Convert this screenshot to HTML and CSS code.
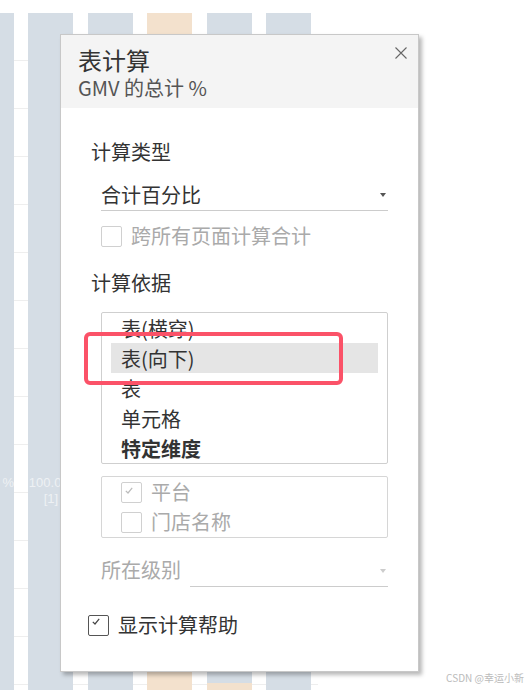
FILE: index.html
```html
<!DOCTYPE html>
<html lang="zh-CN">
<head>
    <meta charset="UTF-8">
    <meta name="viewport" content="width=device-width, initial-scale=1.0">
    <title>表计算</title>
    <link rel="stylesheet" href="styles.css">
</head>
<body>
    <div class="chart">
        <div class="bar bar-edge"><span class="bar-label">%</span></div>
        <div class="bar"><span class="bar-label">100.0%</span><span class="bar-label">[1]</span></div>
        <div class="bar"></div>
        <div class="bar bar-peach"></div>
        <div class="bar bar-split"></div>
        <div class="bar"></div>
    </div>

    <div class="calc">
        <div class="calc-head">
            <div class="calc-title">表计算</div>
            <div class="calc-sub">GMV 的总计 %</div>
            <svg class="close" width="12" height="12" viewBox="0 0 12 12">
                <path d="M0.5 0.5 L11.5 11.5 M11.5 0.5 L0.5 11.5" stroke="#666" stroke-width="1.1" fill="none"/>
            </svg>
        </div>

        <div class="calc-body">
            <div class="label label-type">计算类型</div>
            <div class="select">
                <span>合计百分比</span>
                <span class="caret"></span>
            </div>
            <label class="check check-across disabled">
                <span class="box"></span>
                <span>跨所有页面计算合计</span>
            </label>

            <div class="label label-by">计算依据</div>
            <div class="list">
                <div class="item">表(横穿)</div>
                <div class="item selected">表(向下)</div>
                <div class="item">表</div>
                <div class="item">单元格</div>
                <div class="item bold">特定维度</div>
                <div class="mark"></div>
            </div>

            <div class="dims">
                <label class="check disabled">
                    <span class="box">
                        <svg width="8" height="7" viewBox="0 0 8 7"><path d="M0.8 3.8 L3 6 L7.2 0.8" stroke="#bbb" stroke-width="1.2" fill="none"/></svg>
                    </span>
                    <span>平台</span>
                </label>
                <label class="check disabled">
                    <span class="box"></span>
                    <span>门店名称</span>
                </label>
            </div>

            <div class="level">
                <span class="level-label">所在级别</span>
                <div class="select select-off">
                    <span></span>
                    <span class="caret"></span>
                </div>
            </div>

            <label class="check check-help">
                <span class="box">
                    <svg width="8" height="7" viewBox="0 0 8 7"><path d="M0.8 3.8 L3 6 L7.2 0.8" stroke="#444" stroke-width="1.2" fill="none"/></svg>
                </span>
                <span>显示计算帮助</span>
            </label>
        </div>
    </div>

    <div class="watermark">CSDN @幸运小新</div>
</body>
</html>
```

FILE: styles.css
```css
* {
    box-sizing: border-box;
}
body {
    margin: 0;
    width: 528px;
    height: 690px;
    overflow: hidden;
    background: #fff;
    font-family: "Noto Sans CJK SC", "Noto Sans", sans-serif;
    color: #333;
    position: relative;
}

/* chart behind the dialog */
.chart {
    margin-top: 13px;
    width: 318px;
    height: 677px;
    display: flex;
    gap: 14.4px;
    background: repeating-linear-gradient(to bottom, transparent 0 47px, #eeeeee 47px 48px);
}
.bar {
    width: 45px;
    flex: none;
    background: #d5dde5;
    display: flex;
    flex-direction: column;
    align-items: center;
    padding-top: 462px;
    font-family: "Liberation Sans", Arial, sans-serif;
    font-size: 13px;
    line-height: 16px;
    color: #eef1f4;
    white-space: nowrap;
}
.bar-edge {
    width: 14px;
    align-items: flex-end;
}
.bar-peach {
    background: #f3e1cd;
}
.bar-split {
    background: linear-gradient(to bottom, #d5dde5 0 670px, #f3e1cd 670px);
}

/* dialog */
.calc {
    position: absolute;
    left: 60px;
    top: 34px;
    width: 359px;
    height: 638px;
    background: #fff;
    border: 1px solid #c8c8c8;
    box-shadow: 3px 3px 4px rgba(0, 0, 0, 0.28);
}
.calc-head {
    position: relative;
    height: 73px;
    background: #f4f4f4;
    padding: 11px 17px 0;
}
.calc-title {
    font-size: 24px;
    line-height: 28px;
    color: #333;
}
.calc-sub {
    font-size: 20px;
    line-height: 26px;
    color: #555;
    margin-top: 1px;
}
.close {
    position: absolute;
    right: 11px;
    top: 12px;
}

.calc-body {
    padding: 0 30px;
}
.label {
    font-size: 20px;
    line-height: 26px;
}
.label-type {
    padding-top: 31px;
}
.label-by {
    margin-top: 21px;
}

.select {
    display: flex;
    align-items: center;
    justify-content: space-between;
    margin: 16px 0 0 10px;
    height: 30px;
    border-bottom: 1px solid #ccc;
    font-size: 20px;
    line-height: 28px;
    padding-bottom: 2px;
}
.caret {
    width: 0;
    height: 0;
    margin-right: 2px;
    border-left: 3.5px solid transparent;
    border-right: 3.5px solid transparent;
    border-top: 4px solid #555;
}
.select-off .caret {
    border-top-color: #ccc;
}

.check {
    display: flex;
    align-items: center;
    font-size: 20px;
    line-height: 26px;
}
.check .box {
    width: 21px;
    height: 21px;
    flex: none;
    margin-right: 9px;
    border: 1px solid #555;
    border-radius: 2px;
    padding: 2px 0 0 3px;
    display: flex;
    align-items: flex-start;
}
.check.disabled {
    color: #aaa;
}
.check.disabled .box {
    border-color: #d0d0d0;
}
.check-across {
    margin: 12px 0 0 10px;
}
.check-help {
    margin: 25px 0 0 -3px;
}

.list {
    position: relative;
    margin: 16px 0 0 10px;
    height: 152px;
    border: 1px solid #cfcfcf;
    border-radius: 2px;
    padding: 0 9px;
    font-size: 20px;
}
.item {
    height: 30px;
    line-height: 31px;
    padding-left: 10px;
}
.item.selected {
    background: #e5e5e5;
}
.item.bold {
    font-weight: bold;
}
.mark {
    position: absolute;
    left: -18px;
    top: 19px;
    width: 259px;
    height: 53px;
    border: 4px solid #fb5268;
    border-radius: 6px;
}

.dims {
    margin: 12px 0 0 10px;
    height: 62px;
    border: 1px solid #d6d6d6;
    border-radius: 2px;
    padding-left: 19px;
}
.dims .check {
    height: 30px;
}
.dims .box {
    padding-top: 4px;
}

.level {
    display: flex;
    align-items: flex-start;
    margin: 19px 0 0 10px;
    font-size: 20px;
    color: #aaa;
}
.level-label {
    line-height: 26px;
}
.level .select {
    flex: 1;
    margin: 0 0 0 9px;
    height: 30px;
}

.watermark {
    position: absolute;
    right: 4px;
    bottom: 6px;
    font-size: 10px;
    line-height: 12px;
    color: #bbb;
}
```
